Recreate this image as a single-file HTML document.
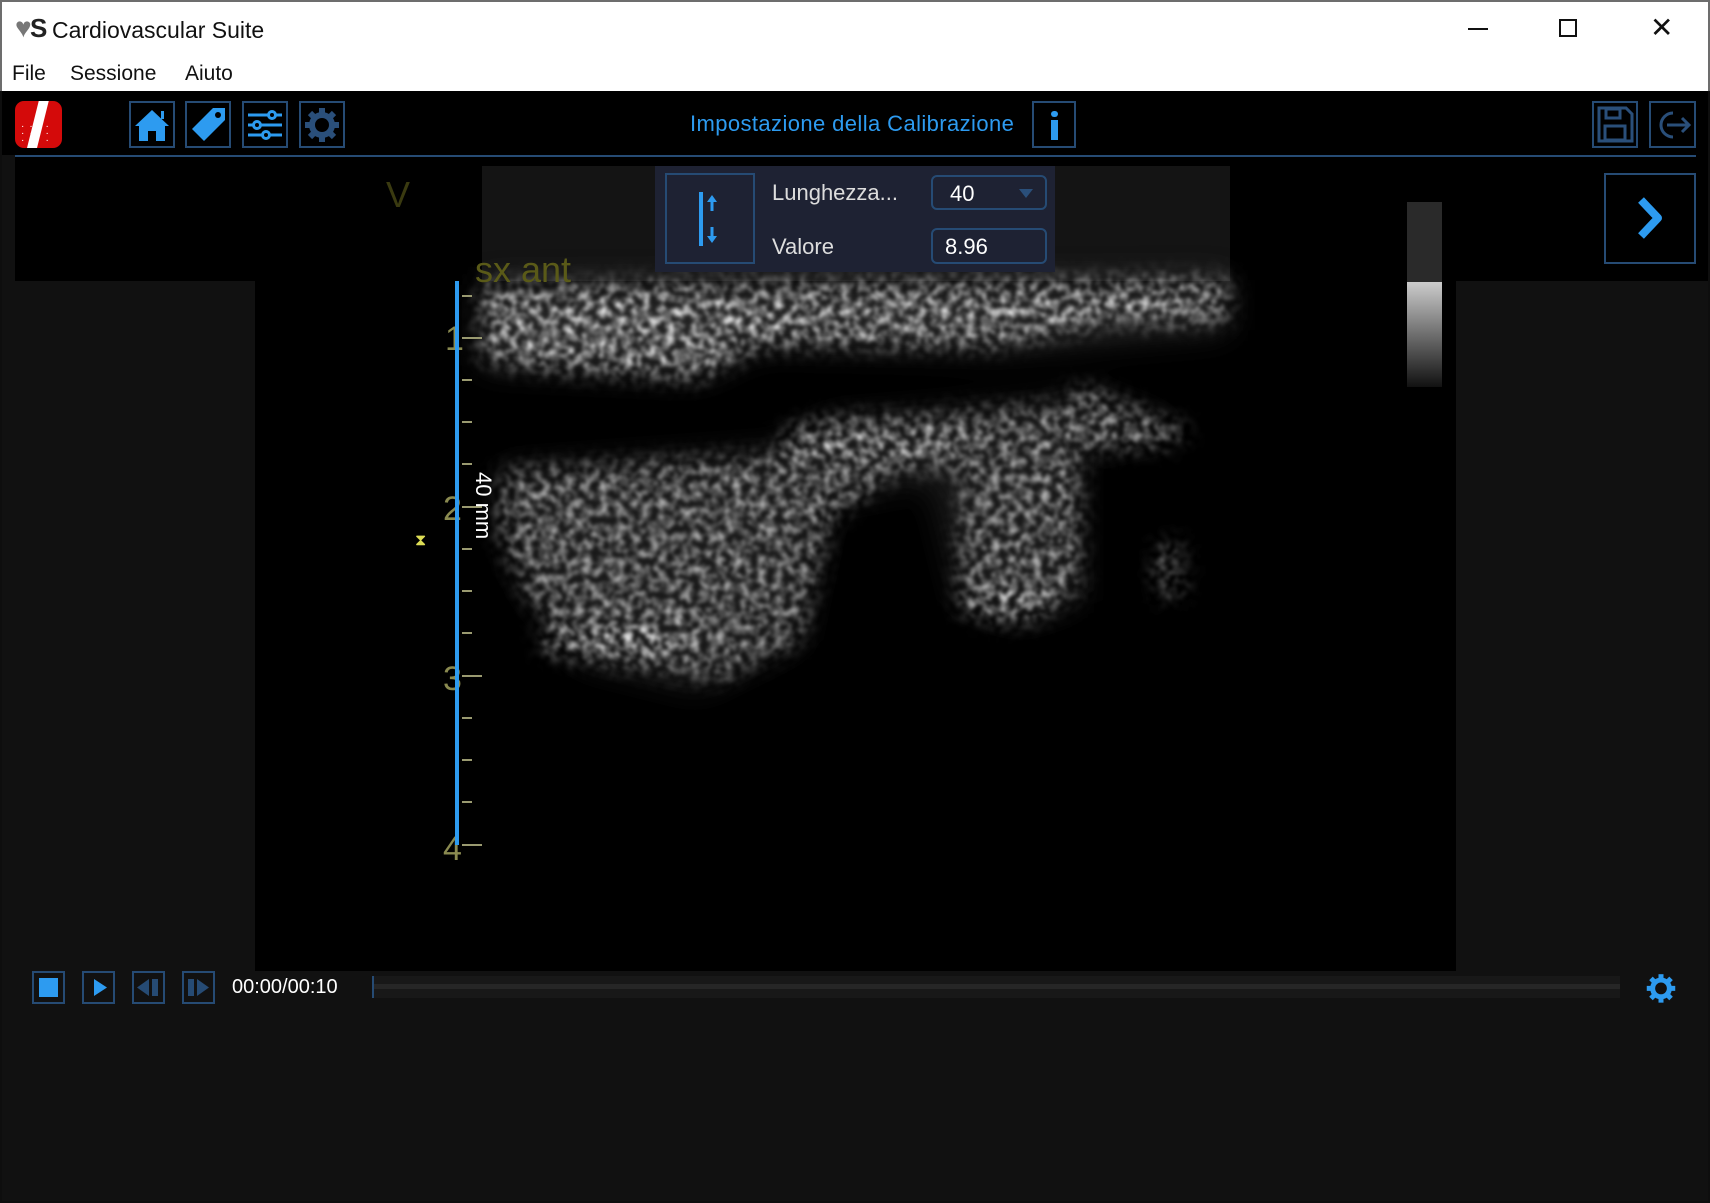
<!DOCTYPE html>
<html><head><meta charset="utf-8"><style>
*{margin:0;padding:0;box-sizing:border-box}
body{width:1710px;height:1203px;background:#0e0e0e;position:relative;overflow:hidden;font-family:"Liberation Sans",sans-serif}
.a{position:absolute}
.btn{position:absolute;border:2px solid #264b74;}
</style></head><body>
<div class="a" style="left:0;top:0;width:1710px;height:91px;background:#fff;border-top:2px solid #6d6d6d;border-left:2px solid #6d6d6d;border-right:2px solid #6d6d6d"></div>
<div class="a" style="left:15px;top:12px;font-size:28px;color:#777">♥</div>
<div class="a" style="left:30px;top:13px;font-size:26px;font-weight:bold;color:#222">S</div>
<div class="a" style="left:52px;top:17px;font-size:23px;color:#111">Cardiovascular Suite</div>
<div class="a" style="left:1468px;top:28px;width:20px;height:2px;background:#111"></div>
<div class="a" style="left:1559px;top:19px;width:18px;height:18px;border:2px solid #111"></div>
<div class="a" style="left:1650px;top:17px;font-size:28px;color:#111;line-height:22px">✕</div>
<div class="a" style="left:12px;top:62px;font-size:21px;color:#111">File</div>
<div class="a" style="left:70px;top:62px;font-size:21px;color:#111">Sessione</div>
<div class="a" style="left:185px;top:62px;font-size:21px;color:#111">Aiuto</div>
<div class="a" style="left:2px;top:91px;width:1706px;height:190px;background:#000"></div>
<div class="a" style="left:2px;top:281px;width:1706px;height:920px;background:#111"></div>
<div class="a" style="left:2px;top:155px;width:13px;height:126px;background:#111"></div>
<div class="a" style="left:15px;top:155px;width:1681px;height:2px;background:#264b74"></div>
<div class="a" style="left:15px;top:101px;width:47px;height:47px;background:#d40a0a;border-radius:9px;overflow:hidden">
<div class="a" style="left:18px;top:-2px;width:10px;height:50px;background:#fff;transform:skewX(-14deg)"></div>
<div class="a" style="left:6px;top:22px;color:#fff;font-size:10px;line-height:7px;letter-spacing:5px">·· ·<br>·· ·<br>·· ·</div></div>
<div class="btn" style="left:129px;top:101px;width:46px;height:47px"><svg width="42" height="43" viewBox="0 0 42 43"><path d="M21 7 L4 23 L8 23 L8 38 L17 38 L17 28 L25 28 L25 38 L34 38 L34 23 L38 23 Z" fill="#2d9bf0"/><rect x="30" y="8" width="3" height="8" fill="#2d9bf0"/></svg></div>
<div class="btn" style="left:185px;top:101px;width:46px;height:47px"><svg width="42" height="43" viewBox="0 0 42 43"><path d="M26 5 L38 5 L38 17 L17 38 L5 26 Z" fill="#2d9bf0"/><circle cx="31" cy="12" r="3" fill="#000"/></svg></div>
<div class="btn" style="left:242px;top:101px;width:46px;height:47px"><svg width="42" height="43" viewBox="0 0 42 43" stroke="#2d9bf0" stroke-width="3" fill="#000"><line x1="4" y1="12" x2="38" y2="12"/><line x1="4" y1="22" x2="38" y2="22"/><line x1="4" y1="32" x2="38" y2="32"/><circle cx="28" cy="12" r="3.5"/><circle cx="13" cy="22" r="3.5"/><circle cx="22" cy="32" r="3.5"/></svg></div>
<div class="btn" style="left:299px;top:101px;width:46px;height:47px"><svg width="42" height="43" viewBox="0 0 42 43"><g fill="#2a4f7a"><circle cx="21" cy="22" r="13"/><g stroke="#2a4f7a" stroke-width="6"><line x1="21" y1="5" x2="21" y2="39"/><line x1="4" y1="22" x2="38" y2="22"/><line x1="9" y1="10" x2="33" y2="34"/><line x1="33" y1="10" x2="9" y2="34"/></g></g><circle cx="21" cy="22" r="7" fill="#000"/></svg></div>
<div class="a" style="left:690px;top:111px;font-size:22px;color:#2d9bf0;letter-spacing:0.4px">Impostazione della Calibrazione</div>
<div class="btn" style="left:1032px;top:101px;width:44px;height:47px"><div class="a" style="left:17px;top:8px;width:7px;height:6px;background:#2d9bf0;border-radius:3px"></div><div class="a" style="left:17px;top:17px;width:7px;height:20px;background:#2d9bf0"></div></div>
<div class="btn" style="left:1592px;top:101px;width:46px;height:47px"><svg width="42" height="43" viewBox="0 0 42 43" fill="none" stroke="#2a4f7a" stroke-width="3"><path d="M5 5 H32 L38 11 V38 H5 Z"/><rect x="12" y="6" width="14" height="9"/><rect x="11" y="23" width="20" height="14"/></svg></div>
<div class="btn" style="left:1649px;top:101px;width:47px;height:47px"><svg width="43" height="43" viewBox="0 0 43 43" fill="none" stroke="#2a4f7a" stroke-width="3"><path d="M22 10 A12 12 0 1 0 22 34"/><path d="M16 22 H38 M31 15 L38 22 L31 29"/></svg></div>
<div class="a" style="left:255px;top:164px;width:1201px;height:807px;background:#000;overflow:hidden">
<svg width="1201" height="807" viewBox="255 164 1201 807">
<defs><filter id="b" x="-20%" y="-20%" width="140%" height="140%"><feGaussianBlur in="SourceGraphic" stdDeviation="10" result="sg"/><feTurbulence type="fractalNoise" baseFrequency="0.12" numOctaves="2" seed="3" result="n"/><feColorMatrix in="n" type="matrix" values="0 0 0 0 1  0 0 0 0 1  0 0 0 0 1  0 0 0 2.2 -0.8" result="m"/><feComposite in="sg" in2="m" operator="in" result="c"/><feGaussianBlur in="c" stdDeviation="1.5"/></filter><filter id="s"><feGaussianBlur stdDeviation="16"/></filter></defs>
<rect x="482" y="166" width="748" height="115" fill="#141414"/>
<g filter="url(#s)" opacity="0.5">
<path d="M482 285 L1228 280 L1228 330 L1000 350 L760 345 L700 375 L482 365 Z" fill="#444"/>
<path d="M500 470 L780 450 L830 420 L960 410 L1060 400 L1080 390 L1180 430 L1080 450 L1080 600 L1020 620 L960 600 L930 480 L830 500 L800 640 L700 690 L580 660 L520 580 Z" fill="#333"/>
</g>
<g filter="url(#b)">
<path d="M482 285 L1228 280 L1228 320 L1100 325 L1000 345 L900 345 L760 345 L700 378 L560 370 L482 360 Z" fill="#e8e8e8"/>
<path d="M500 470 L780 455 L830 425 L960 412 L1060 405 L1080 385 L1190 430 L1170 445 L1080 450 L1080 590 L1020 620 L960 610 L960 470 L900 470 L830 520 L800 640 L720 680 L600 660 L530 600 L500 540 Z" fill="#b0b0b0"/>
<ellipse cx="620" cy="640" rx="80" ry="20" fill="#f0f0f0"/>
<ellipse cx="1010" cy="600" rx="45" ry="20" fill="#f0f0f0"/>
<ellipse cx="870" cy="440" rx="90" ry="22" fill="#e0e0e0"/>
<ellipse cx="1170" cy="570" rx="15" ry="30" fill="#888"/>
</g>
<rect x="1407" y="202" width="35" height="80" fill="#2a2a2a"/>
<defs><linearGradient id="g" x1="0" y1="0" x2="0" y2="1"><stop offset="0" stop-color="#ccc"/><stop offset="1" stop-color="#111"/></linearGradient></defs>
<rect x="1407" y="282" width="35" height="105" fill="url(#g)"/>
<text x="386" y="207" font-family="Liberation Sans" font-size="36" fill="#3a3a10">V</text>
<text x="475" y="282" font-family="Liberation Sans" font-size="36" fill="#5a5a18">sx ant</text>
<g fill="#8a8a50" font-family="Liberation Sans" font-size="34"><text x="445" y="350">1</text><text x="443" y="520">2</text><text x="443" y="690">3</text><text x="443" y="860">4</text></g>
<g stroke="#9a9a70" stroke-width="2"><line x1="462" y1="296" x2="472" y2="296"/><line x1="462" y1="338" x2="482" y2="338"/><line x1="462" y1="380" x2="472" y2="380"/><line x1="462" y1="422" x2="472" y2="422"/><line x1="462" y1="464" x2="472" y2="464"/><line x1="462" y1="507" x2="482" y2="507"/><line x1="462" y1="549" x2="472" y2="549"/><line x1="462" y1="591" x2="472" y2="591"/><line x1="462" y1="633" x2="472" y2="633"/><line x1="462" y1="676" x2="482" y2="676"/><line x1="462" y1="718" x2="472" y2="718"/><line x1="462" y1="760" x2="472" y2="760"/><line x1="462" y1="802" x2="472" y2="802"/><line x1="462" y1="845" x2="482" y2="845"/></g>
<rect x="455" y="281" width="4" height="564" fill="#2d9bf0"/>
<text x="415" y="545" font-family="Liberation Sans" font-size="16" fill="#dddd55">⧗</text>
<text transform="translate(476,472) rotate(90)" font-family="Liberation Sans" font-size="22" fill="#fff">40 mm</text>
</svg></div>
<div class="a" style="left:655px;top:166px;width:400px;height:106px;background:#1e2233"></div>
<div class="btn" style="left:665px;top:173px;width:90px;height:91px"><div class="a" style="left:32px;top:17px;width:4px;height:54px;background:#2d9bf0"></div><svg class="a" style="left:38px;top:18px" width="14" height="52"><path d="M7 2 L2 9 H5.5 V18 H8.5 V9 H12Z M7 50 L2 43 H5.5 V34 H8.5 V43 H12Z" fill="#2d9bf0"/></svg></div>
<div class="a" style="left:772px;top:180px;font-size:22px;color:#ddd">Lunghezza...</div>
<div class="a" style="left:772px;top:234px;font-size:22px;color:#ddd">Valore</div>
<div class="a" style="left:931px;top:175px;width:116px;height:35px;border:2px solid #264b74;border-radius:6px"><span class="a" style="left:17px;top:4px;font-size:22px;color:#fff">40</span><svg class="a" style="left:86px;top:12px" width="14" height="10"><path d="M0 0 H14 L7 9Z" fill="#2a4f7a"/></svg></div>
<div class="a" style="left:931px;top:228px;width:116px;height:36px;border:2px solid #264b74;border-radius:6px"><span class="a" style="left:12px;top:4px;font-size:22px;color:#fff">8.96</span></div>
<div class="btn" style="left:1604px;top:173px;width:92px;height:91px"><svg width="88" height="87" viewBox="0 0 88 87"><path d="M35 25 L52 43 L35 61" fill="none" stroke="#2d9bf0" stroke-width="8" stroke-linejoin="round"/></svg></div>
<div class="a" style="left:15px;top:971px;width:1681px;height:49px;background:#111"></div>
<div class="btn" style="left:32px;top:971px;width:33px;height:33px"><div class="a" style="left:5px;top:5px;width:19px;height:19px;background:#2d9bf0"></div></div>
<div class="btn" style="left:82px;top:971px;width:33px;height:33px"><svg width="29" height="29"><path d="M10 6 L23 14.5 L10 23Z" fill="#2d9bf0"/></svg></div>
<div class="btn" style="left:132px;top:971px;width:33px;height:33px"><svg width="29" height="29"><path d="M3 14.5 L15 6 L15 23Z" fill="#264b74"/><rect x="18" y="6" width="6" height="17" fill="#264b74"/></svg></div>
<div class="btn" style="left:182px;top:971px;width:33px;height:33px"><svg width="29" height="29"><rect x="4" y="6" width="6" height="17" fill="#264b74"/><path d="M13 6 L25 14.5 L13 23Z" fill="#264b74"/></svg></div>
<div class="a" style="left:232px;top:976px;font-size:20px;color:#fff">00:00/00:10</div>
<div class="a" style="left:372px;top:976px;width:2px;height:22px;background:#264b74"></div>
<div class="a" style="left:374px;top:976px;width:1246px;height:22px;background:#181818"></div>
<div class="a" style="left:374px;top:984px;width:1246px;height:5px;background:#262626"></div>
<svg class="a" style="left:1643px;top:970px" width="36" height="36" viewBox="0 0 42 43"><g fill="#2d9bf0"><circle cx="21" cy="22" r="13"/><g stroke="#2d9bf0" stroke-width="6"><line x1="21" y1="5" x2="21" y2="39"/><line x1="4" y1="22" x2="38" y2="22"/><line x1="9" y1="10" x2="33" y2="34"/><line x1="33" y1="10" x2="9" y2="34"/></g></g><circle cx="21" cy="22" r="7" fill="#111"/></svg>
</body></html>
